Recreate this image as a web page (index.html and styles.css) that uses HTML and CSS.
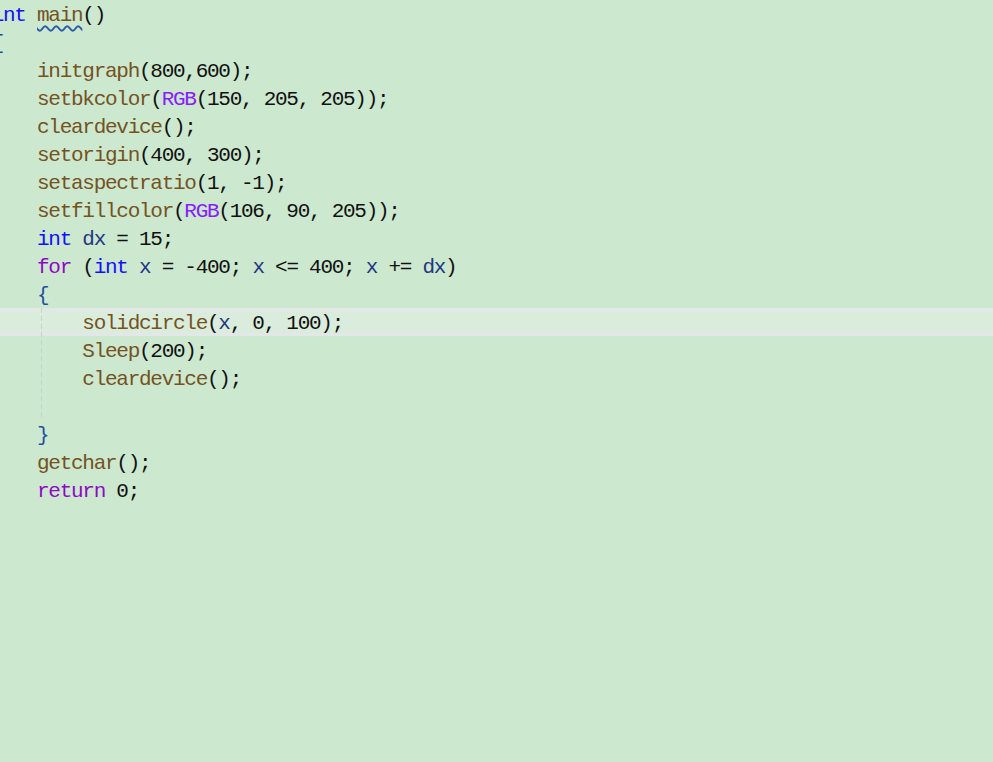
FILE: index.html
```html
<!DOCTYPE html>
<html>
<head>
<meta charset="utf-8">
<link rel="stylesheet" href="styles.css">
</head>
<body>
<div class="editor">
  <div class="code">
    <div class="line"><span class="kw">int</span> <span class="fn squiggle">main</span>()</div>
    <div class="line"><span class="br">{</span></div>
    <div class="line">    <span class="fn">initgraph</span>(800,600);</div>
    <div class="line">    <span class="fn">setbkcolor</span>(<span class="mac">RGB</span>(150, 205, 205));</div>
    <div class="line">    <span class="fn">cleardevice</span>();</div>
    <div class="line">    <span class="fn">setorigin</span>(400, 300);</div>
    <div class="line">    <span class="fn">setaspectratio</span>(1, -1);</div>
    <div class="line">    <span class="fn">setfillcolor</span>(<span class="mac">RGB</span>(106, 90, 205));</div>
    <div class="line">    <span class="kw">int</span> <span class="var">dx</span> = 15;</div>
    <div class="line">    <span class="ctl">for</span> (<span class="kw">int</span> <span class="var">x</span> = -400; <span class="var">x</span> &lt;= 400; <span class="var">x</span> += <span class="var">dx</span>)</div>
    <div class="line">    <span class="br">{</span></div>
    <div class="block">
      <div class="line current">        <span class="fn">solidcircle</span>(<span class="var">x</span>, 0, 100);</div>
      <div class="line">        <span class="fn">Sleep</span>(200);</div>
      <div class="line">        <span class="fn">cleardevice</span>();</div>
      <div class="line"> </div>
    </div>
    <div class="line">    <span class="br">}</span></div>
    <div class="line">    <span class="fn">getchar</span>();</div>
    <div class="line">    <span class="ctl">return</span> 0;</div>
  </div>
</div>
</body>
</html>
```
FILE: styles.css
```css
html, body {
  margin: 0;
  padding: 0;
  background: #cce8cf;
}

.editor {
  width: 993px;
  height: 762px;
  overflow: hidden;
  background: #cce8cf;
}

.code {
  margin-left: -8.33px;
  font-family: "Liberation Mono", "DejaVu Sans Mono", monospace;
  font-size: 21px;
  letter-spacing: -1.27px;
  color: #111111;
}

.line {
  height: 28px;
  padding-top: 4px;
  line-height: 24px;
  white-space: pre;
  box-sizing: border-box;
}

.current {
  margin-right: -20px;
  background: #daeddc;
  border-top: 3px solid #e4e7e8;
  border-bottom: 3px solid #e4e7e8;
  padding-top: 4px;
  line-height: 18px;
}

.block {
  position: relative;
}

.block::before {
  content: "";
  position: absolute;
  left: 49px;
  top: 0;
  bottom: 0;
  width: 1px;
  background: repeating-linear-gradient(to bottom, #c6d1ca 0, #c6d1ca 5px, transparent 5px, transparent 8px);
}

.kw { color: #1010ff; }
.ctl { color: #8f08c4; }
.fn { color: #74531f; }
.mac { color: #8a1bff; }
.var { color: #1f377f; }
.br { color: #1f4fa0; }

.squiggle {
  text-decoration: underline wavy #2a5aa8;
  text-decoration-thickness: 1.5px;
  text-underline-offset: 4px;
}
```
